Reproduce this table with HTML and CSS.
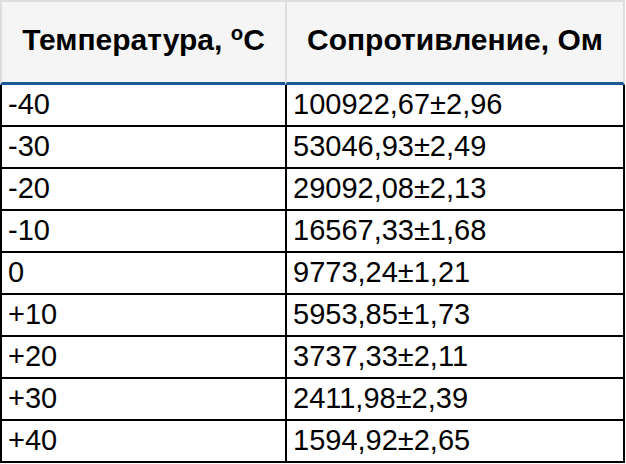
FILE: index.html
```html
<!DOCTYPE html>
<html lang="ru">
<head>
<meta charset="utf-8">
<link rel="stylesheet" href="styles.css">
</head>
<body>
<table class="data">
  <colgroup><col class="c1"><col class="c2"></colgroup>
  <thead>
    <tr><th>Температура, <sup>o</sup>C</th><th class="last">Сопротивление, Ом</th></tr>
  </thead>
  <tbody>
    <tr><td>-40</td><td class="last">100922,67±2,96</td></tr>
    <tr><td>-30</td><td class="last">53046,93±2,49</td></tr>
    <tr><td>-20</td><td class="last">29092,08±2,13</td></tr>
    <tr><td>-10</td><td class="last">16567,33±1,68</td></tr>
    <tr><td>0</td><td class="last">9773,24±1,21</td></tr>
    <tr><td>+10</td><td class="last">5953,85±1,73</td></tr>
    <tr><td>+20</td><td class="last">3737,33±2,11</td></tr>
    <tr><td>+30</td><td class="last">2411,98±2,39</td></tr>
    <tr><td>+40</td><td class="last">1594,92±2,65</td></tr>
  </tbody>
</table>
</body>
</html>
```
FILE: styles.css
```css
html, body { margin: 0; padding: 0; background: #fff; }
body { font-family: "Liberation Sans", Arial, sans-serif; color: #000; }
.data {
  border-collapse: separate;
  border-spacing: 0;
  table-layout: fixed;
  width: 625px;
  font-size: 29px;
}
.c1 { width: 285px; }
.c2 { width: 340px; }
.data th, .data td { box-sizing: border-box; }
.data th {
  height: 85px;
  background: #f5f5f5;
  font-size: 30px;
  font-weight: bold;
  text-align: center;
  vertical-align: middle;
  padding: 0 2px 4px;
  border-top: 2px solid #dedede;
  border-left: 2px solid #dedede;
  border-bottom: 3px solid #1c5a96;
  white-space: nowrap;
}
.data th.last { border-right: 2px solid #dedede; }
.data th sup { font-size: 0.68em; vertical-align: 0.5em; line-height: 0; }
.data td {
  height: 42px;
  padding: 0 6px 1px;
  text-align: left;
  vertical-align: middle;
  border-left: 2px solid #000;
  border-bottom: 2px solid #000;
  line-height: 1;
  white-space: nowrap;
}
.data td.last { border-right: 2px solid #000; }
```
